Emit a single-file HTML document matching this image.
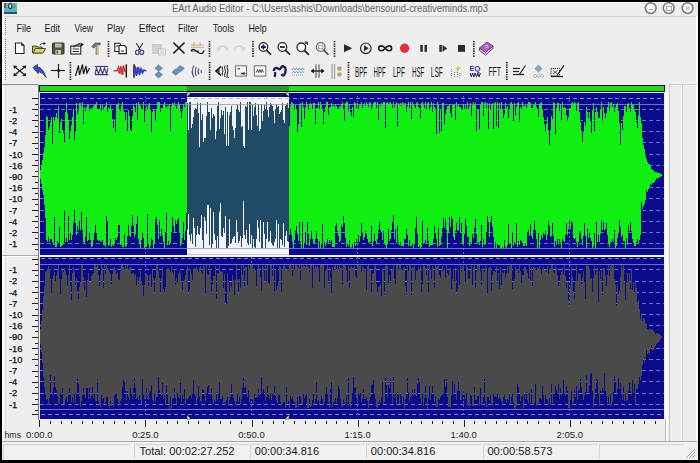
<!DOCTYPE html><html><head><meta charset="utf-8"><style>html,body{margin:0;padding:0;width:700px;height:463px;overflow:hidden;background:#eeeeee}svg{display:block}</style></head><body>
<svg width="700" height="463" viewBox="0 0 700 463" shape-rendering="crispEdges">
<rect x="0" y="0" width="700" height="463" fill="#eeeeee"/>
<rect x="0" y="2" width="700" height="14" fill="#ededed"/>
<rect x="0" y="2" width="700" height="1" fill="#fafafa"/>
<rect x="0" y="16" width="700" height="1" fill="#d4d4d4"/>
<rect x="4" y="3" width="13" height="10.5" fill="#58b4c4"/>
<rect x="4" y="3" width="13" height="4" fill="#7ab8b0"/>
<rect x="4" y="12.3" width="13" height="1.3" fill="#205a68"/>
<rect x="4" y="3" width="1.5" height="5" fill="#3a6a60"/>
<ellipse cx="10.2" cy="6" rx="1.7" ry="2.6" fill="#c8f0e0" stroke="#1a4a3a" stroke-width="1.3" shape-rendering="auto"/>
<rect x="13.5" y="3.5" width="1.2" height="4" fill="#4a8a80"/>
<text x="172" y="11.5" font-family="Liberation Sans" font-size="10" fill="#646464" textLength="316" lengthAdjust="spacingAndGlyphs">EArt Audio Editor - C:\Users\ashis\Downloads\bensound-creativeminds.mp3</text>
<circle cx="650.7" cy="8.1" r="5.4" fill="#f6f6f6" stroke="#7a7a7a" stroke-width="1.6" shape-rendering="auto"/>
<circle cx="668.7" cy="8.1" r="5.4" fill="#f6f6f6" stroke="#7a7a7a" stroke-width="1.6" shape-rendering="auto"/>
<circle cx="687.6" cy="8.1" r="5.4" fill="#f6f6f6" stroke="#7a7a7a" stroke-width="1.6" shape-rendering="auto"/>
<line x1="648.5" y1="9.5" x2="653" y2="9.5" stroke="#9a9a9a" stroke-width="1"/>
<rect x="666.5" y="6" width="4.5" height="4" fill="none" stroke="#a0a0a0" stroke-width="0.9"/>
<path d="M685.8 6.5 L689.4 10 M689.4 6.5 L685.8 10" stroke="#a0a0a0" stroke-width="0.9" shape-rendering="auto"/>
<text x="16.4" y="31.6" font-family="Liberation Sans" font-size="10.3" fill="#1a1a1a" textLength="14.6" lengthAdjust="spacingAndGlyphs">File</text>
<text x="44.4" y="31.6" font-family="Liberation Sans" font-size="10.3" fill="#1a1a1a" textLength="15.6" lengthAdjust="spacingAndGlyphs">Edit</text>
<text x="74.4" y="31.6" font-family="Liberation Sans" font-size="10.3" fill="#1a1a1a" textLength="18.6" lengthAdjust="spacingAndGlyphs">View</text>
<text x="107" y="31.6" font-family="Liberation Sans" font-size="10.3" fill="#1a1a1a" textLength="18" lengthAdjust="spacingAndGlyphs">Play</text>
<text x="138.7" y="31.6" font-family="Liberation Sans" font-size="10.3" fill="#1a1a1a" textLength="25.6" lengthAdjust="spacingAndGlyphs">Effect</text>
<text x="178" y="31.6" font-family="Liberation Sans" font-size="10.3" fill="#1a1a1a" textLength="20" lengthAdjust="spacingAndGlyphs">Filter</text>
<text x="212.7" y="31.6" font-family="Liberation Sans" font-size="10.3" fill="#1a1a1a" textLength="21.3" lengthAdjust="spacingAndGlyphs">Tools</text>
<text x="248.4" y="31.6" font-family="Liberation Sans" font-size="10.3" fill="#1a1a1a" textLength="18.3" lengthAdjust="spacingAndGlyphs">Help</text>
<rect x="0" y="0" width="700" height="2" fill="#000"/>
<rect x="0" y="0" width="2" height="463" fill="#000"/>
<rect x="698" y="0" width="2" height="463" fill="#000"/>
<rect x="0" y="460" width="700" height="3" fill="#000"/>
<rect x="2" y="16" width="2" height="425" fill="#fbfbfb"/>
<rect x="5" y="85" width="1" height="356" fill="#e2e2e2"/>
<line x1="5.5" y1="18" x2="5.5" y2="36" stroke="#707070" stroke-width="1" stroke-dasharray="1 1"/>
<rect x="696" y="16" width="2" height="425" fill="#fbfbfb"/>
<rect x="2" y="84" width="36" height="1" fill="#8c8c8c"/>
<rect x="38" y="85" width="1" height="335" fill="#7a7a7a"/>
<text x="9" y="112.7" font-family="Liberation Sans" font-size="9.4" fill="#111" stroke="#111" stroke-width="0.25">-1</text>
<rect x="32" y="109" width="6" height="1" fill="#202020"/>
<text x="9" y="123.9" font-family="Liberation Sans" font-size="9.4" fill="#111" stroke="#111" stroke-width="0.25">-2</text>
<rect x="32" y="120" width="6" height="1" fill="#202020"/>
<text x="9" y="135.1" font-family="Liberation Sans" font-size="9.4" fill="#111" stroke="#111" stroke-width="0.25">-4</text>
<rect x="32" y="132" width="6" height="1" fill="#202020"/>
<text x="9" y="146.3" font-family="Liberation Sans" font-size="9.4" fill="#111" stroke="#111" stroke-width="0.25">-7</text>
<rect x="32" y="143" width="6" height="1" fill="#202020"/>
<text x="9" y="157.5" font-family="Liberation Sans" font-size="9.4" fill="#111" stroke="#111" stroke-width="0.25">-10</text>
<rect x="32" y="154" width="6" height="1" fill="#202020"/>
<text x="9" y="168.7" font-family="Liberation Sans" font-size="9.4" fill="#111" stroke="#111" stroke-width="0.25">-16</text>
<rect x="32" y="165" width="6" height="1" fill="#202020"/>
<text x="9" y="179.9" font-family="Liberation Sans" font-size="9.4" fill="#111" stroke="#111" stroke-width="0.25">-90</text>
<rect x="32" y="176" width="6" height="1" fill="#202020"/>
<text x="9" y="191.1" font-family="Liberation Sans" font-size="9.4" fill="#111" stroke="#111" stroke-width="0.25">-16</text>
<rect x="32" y="188" width="6" height="1" fill="#202020"/>
<text x="9" y="202.3" font-family="Liberation Sans" font-size="9.4" fill="#111" stroke="#111" stroke-width="0.25">-10</text>
<rect x="32" y="199" width="6" height="1" fill="#202020"/>
<text x="9" y="213.5" font-family="Liberation Sans" font-size="9.4" fill="#111" stroke="#111" stroke-width="0.25">-7</text>
<rect x="32" y="210" width="6" height="1" fill="#202020"/>
<text x="9" y="224.7" font-family="Liberation Sans" font-size="9.4" fill="#111" stroke="#111" stroke-width="0.25">-4</text>
<rect x="32" y="221" width="6" height="1" fill="#202020"/>
<text x="9" y="235.9" font-family="Liberation Sans" font-size="9.4" fill="#111" stroke="#111" stroke-width="0.25">-2</text>
<rect x="32" y="232" width="6" height="1" fill="#202020"/>
<text x="9" y="247.1" font-family="Liberation Sans" font-size="9.4" fill="#111" stroke="#111" stroke-width="0.25">-1</text>
<rect x="32" y="244" width="6" height="1" fill="#202020"/>
<rect x="35" y="104" width="3" height="1" fill="#202020"/>
<rect x="35" y="115" width="3" height="1" fill="#202020"/>
<rect x="35" y="126" width="3" height="1" fill="#202020"/>
<rect x="35" y="137" width="3" height="1" fill="#202020"/>
<rect x="35" y="148" width="3" height="1" fill="#202020"/>
<rect x="35" y="160" width="3" height="1" fill="#202020"/>
<rect x="35" y="171" width="3" height="1" fill="#202020"/>
<rect x="35" y="182" width="3" height="1" fill="#202020"/>
<rect x="35" y="193" width="3" height="1" fill="#202020"/>
<rect x="35" y="204" width="3" height="1" fill="#202020"/>
<rect x="35" y="216" width="3" height="1" fill="#202020"/>
<rect x="35" y="227" width="3" height="1" fill="#202020"/>
<rect x="35" y="238" width="3" height="1" fill="#202020"/>
<rect x="35" y="249" width="3" height="1" fill="#202020"/>
<rect x="32" y="98" width="6" height="1" fill="#202020"/>
<text x="9" y="273.2" font-family="Liberation Sans" font-size="9.4" fill="#111" stroke="#111" stroke-width="0.25">-1</text>
<rect x="32" y="270" width="6" height="1" fill="#202020"/>
<text x="9" y="284.4" font-family="Liberation Sans" font-size="9.4" fill="#111" stroke="#111" stroke-width="0.25">-2</text>
<rect x="32" y="281" width="6" height="1" fill="#202020"/>
<text x="9" y="295.6" font-family="Liberation Sans" font-size="9.4" fill="#111" stroke="#111" stroke-width="0.25">-4</text>
<rect x="32" y="292" width="6" height="1" fill="#202020"/>
<text x="9" y="306.8" font-family="Liberation Sans" font-size="9.4" fill="#111" stroke="#111" stroke-width="0.25">-7</text>
<rect x="32" y="303" width="6" height="1" fill="#202020"/>
<text x="9" y="318.0" font-family="Liberation Sans" font-size="9.4" fill="#111" stroke="#111" stroke-width="0.25">-10</text>
<rect x="32" y="315" width="6" height="1" fill="#202020"/>
<text x="9" y="329.2" font-family="Liberation Sans" font-size="9.4" fill="#111" stroke="#111" stroke-width="0.25">-16</text>
<rect x="32" y="326" width="6" height="1" fill="#202020"/>
<text x="9" y="340.4" font-family="Liberation Sans" font-size="9.4" fill="#111" stroke="#111" stroke-width="0.25">-90</text>
<rect x="32" y="337" width="6" height="1" fill="#202020"/>
<text x="9" y="351.6" font-family="Liberation Sans" font-size="9.4" fill="#111" stroke="#111" stroke-width="0.25">-16</text>
<rect x="32" y="348" width="6" height="1" fill="#202020"/>
<text x="9" y="362.8" font-family="Liberation Sans" font-size="9.4" fill="#111" stroke="#111" stroke-width="0.25">-10</text>
<rect x="32" y="359" width="6" height="1" fill="#202020"/>
<text x="9" y="374.0" font-family="Liberation Sans" font-size="9.4" fill="#111" stroke="#111" stroke-width="0.25">-7</text>
<rect x="32" y="371" width="6" height="1" fill="#202020"/>
<text x="9" y="385.2" font-family="Liberation Sans" font-size="9.4" fill="#111" stroke="#111" stroke-width="0.25">-4</text>
<rect x="32" y="382" width="6" height="1" fill="#202020"/>
<text x="9" y="396.4" font-family="Liberation Sans" font-size="9.4" fill="#111" stroke="#111" stroke-width="0.25">-2</text>
<rect x="32" y="393" width="6" height="1" fill="#202020"/>
<text x="9" y="407.6" font-family="Liberation Sans" font-size="9.4" fill="#111" stroke="#111" stroke-width="0.25">-1</text>
<rect x="32" y="404" width="6" height="1" fill="#202020"/>
<rect x="35" y="264" width="3" height="1" fill="#202020"/>
<rect x="35" y="275" width="3" height="1" fill="#202020"/>
<rect x="35" y="287" width="3" height="1" fill="#202020"/>
<rect x="35" y="298" width="3" height="1" fill="#202020"/>
<rect x="35" y="309" width="3" height="1" fill="#202020"/>
<rect x="35" y="320" width="3" height="1" fill="#202020"/>
<rect x="35" y="331" width="3" height="1" fill="#202020"/>
<rect x="35" y="343" width="3" height="1" fill="#202020"/>
<rect x="35" y="354" width="3" height="1" fill="#202020"/>
<rect x="35" y="365" width="3" height="1" fill="#202020"/>
<rect x="35" y="376" width="3" height="1" fill="#202020"/>
<rect x="35" y="387" width="3" height="1" fill="#202020"/>
<rect x="35" y="399" width="3" height="1" fill="#202020"/>
<rect x="35" y="410" width="3" height="1" fill="#202020"/>
<rect x="32" y="259" width="6" height="1" fill="#202020"/>
<rect x="32" y="414" width="6" height="1" fill="#202020"/>
<rect x="2" y="255" width="36" height="1" fill="#a8a8a8"/>
<rect x="2" y="256" width="36" height="1" fill="#fafafa"/>
<rect x="39" y="85" width="626" height="7" fill="#000"/>
<rect x="40" y="86" width="624" height="5" fill="#22dd22"/>
<rect x="187" y="86" width="102" height="5" fill="#2a9a2a"/>
<rect x="39" y="92" width="626" height="1" fill="#d8e4f0"/>
<rect x="40" y="93" width="624" height="162" fill="#0a0a8a"/>
<line x1="40" y1="109.5" x2="664" y2="109.5" stroke="#6a6ad8" stroke-width="1" stroke-dasharray="4 3"/>
<line x1="40" y1="120.5" x2="664" y2="120.5" stroke="#6a6ad8" stroke-width="1" stroke-dasharray="4 3"/>
<line x1="40" y1="131.5" x2="664" y2="131.5" stroke="#6a6ad8" stroke-width="1" stroke-dasharray="4 3"/>
<line x1="40" y1="142.5" x2="664" y2="142.5" stroke="#6a6ad8" stroke-width="1" stroke-dasharray="4 3"/>
<line x1="40" y1="154.5" x2="664" y2="154.5" stroke="#6a6ad8" stroke-width="1" stroke-dasharray="4 3"/>
<line x1="40" y1="165.5" x2="664" y2="165.5" stroke="#6a6ad8" stroke-width="1" stroke-dasharray="4 3"/>
<line x1="40" y1="187.5" x2="664" y2="187.5" stroke="#6a6ad8" stroke-width="1" stroke-dasharray="4 3"/>
<line x1="40" y1="198.5" x2="664" y2="198.5" stroke="#6a6ad8" stroke-width="1" stroke-dasharray="4 3"/>
<line x1="40" y1="210.5" x2="664" y2="210.5" stroke="#6a6ad8" stroke-width="1" stroke-dasharray="4 3"/>
<line x1="40" y1="221.5" x2="664" y2="221.5" stroke="#6a6ad8" stroke-width="1" stroke-dasharray="4 3"/>
<line x1="40" y1="232.5" x2="664" y2="232.5" stroke="#6a6ad8" stroke-width="1" stroke-dasharray="4 3"/>
<line x1="40" y1="243.5" x2="664" y2="243.5" stroke="#6a6ad8" stroke-width="1" stroke-dasharray="4 3"/>
<line x1="41" y1="98.5" x2="664" y2="98.5" stroke="#8080e8" stroke-width="1" stroke-dasharray="4 3"/>
<line x1="145.5" y1="96" x2="145.5" y2="256" stroke="#5a5ac8" stroke-width="1" stroke-dasharray="2 2"/>
<line x1="251.5" y1="96" x2="251.5" y2="256" stroke="#5a5ac8" stroke-width="1" stroke-dasharray="2 2"/>
<line x1="357.5" y1="96" x2="357.5" y2="256" stroke="#5a5ac8" stroke-width="1" stroke-dasharray="2 2"/>
<line x1="463.5" y1="96" x2="463.5" y2="256" stroke="#5a5ac8" stroke-width="1" stroke-dasharray="2 2"/>
<line x1="569.5" y1="96" x2="569.5" y2="256" stroke="#5a5ac8" stroke-width="1" stroke-dasharray="2 2"/>
<path d="M40.5 170.3V179.4M41.5 165.6V184.4M42.5 160.0V189.5M43.5 153.3V194.7M44.5 146.8V205.2M45.5 135.3V217.7M46.5 115.5V239.6M47.5 116.9V242.3M48.5 129.7V236.6M49.5 127.1V242.3M50.5 122.0V238.7M51.5 116.9V238.6M52.5 144.1V242.1M53.5 116.7V244.6M54.5 120.5V217.4M55.5 116.7V247.4M56.5 112.9V247.3M57.5 117.8V241.2M58.5 106.2V243.4M59.5 132.8V226.6M60.5 122.2V247.4M61.5 119.0V245.5M62.5 129.9V244.6M63.5 132.5V243.5M64.5 143.0V209.7M65.5 111.8V241.5M66.5 102.9V238.2M67.5 113.1V241.5M68.5 120.3V216.3M69.5 139.2V240.3M70.5 132.4V232.6M71.5 124.6V240.3M72.5 116.9V235.3M73.5 109.2V222.5M74.5 139.6V209.8M75.5 132.4V222.5M76.5 102.8V235.3M77.5 113.7V226.2M78.5 110.6V229.7M79.5 103.2V220.5M80.5 102.9V229.7M81.5 106.6V211.9M82.5 102.3V230.0M83.5 124.1V242.0M84.5 106.8V242.6M85.5 111.2V237.3M86.5 106.8V217.0M87.5 104.1V241.4M88.5 104.8V240.1M89.5 110.8V232.3M90.5 108.1V240.1M91.5 109.7V247.1M92.5 108.1V246.4M93.5 106.4V240.4M94.5 105.2V232.9M95.5 103.5V225.3M96.5 101.7V232.9M97.5 108.5V240.4M98.5 108.5V240.7M99.5 109.3V239.5M100.5 103.8V242.3M101.5 110.9V240.7M102.5 104.5V240.3M103.5 110.3V245.0M104.5 106.9V245.0M105.5 106.4V246.9M106.5 101.8V215.7M107.5 112.4V221.0M108.5 108.4V245.6M109.5 108.4V245.1M110.5 104.7V239.2M111.5 110.2V246.7M112.5 118.8V245.2M113.5 127.5V246.2M114.5 118.8V244.1M115.5 132.4V238.3M116.5 105.4V240.2M117.5 103.6V236.7M118.5 102.5V225.4M119.5 109.5V224.5M120.5 110.6V244.5M121.5 106.4V244.3M122.5 102.1V247.2M123.5 109.9V246.8M124.5 111.5V234.1M125.5 121.4V246.8M126.5 111.5V246.3M127.5 130.8V236.2M128.5 110.0V224.5M129.5 115.6V236.2M130.5 129.7V237.0M131.5 130.6V225.9M132.5 116.0V214.9M133.5 104.8V225.9M134.5 107.3V237.0M135.5 111.8V234.0M136.5 102.5V223.5M137.5 119.6V216.4M138.5 102.3V239.0M139.5 103.7V243.6M140.5 105.6V247.9M141.5 108.8V240.1M142.5 109.3V232.5M143.5 101.8V238.3M144.5 121.5V247.6M145.5 111.1V247.1M146.5 106.2V247.0M147.5 109.3V213.6M148.5 105.0V243.1M149.5 102.5V247.6M150.5 109.7V246.3M151.5 132.2V238.3M152.5 112.2V240.1M153.5 109.3V247.7M154.5 111.1V242.9M155.5 121.2V219.3M156.5 108.9V216.5M157.5 101.6V225.3M158.5 101.7V238.5M159.5 102.3V220.3M160.5 111.5V235.6M161.5 108.3V229.3M162.5 107.8V235.6M163.5 105.3V241.8M164.5 101.8V247.9M165.5 105.7V231.8M166.5 108.4V213.1M167.5 105.7V245.3M168.5 106.1V240.6M169.5 104.1V245.1M170.5 131.1V243.0M171.5 105.7V232.3M172.5 102.5V216.7M173.5 105.4V225.7M174.5 101.6V233.1M175.5 105.6V220.2M176.5 109.4V224.3M177.5 105.3V220.1M178.5 101.7V218.1M179.5 104.4V233.0M180.5 111.3V246.3M181.5 118.4V242.5M182.5 110.9V237.6M183.5 103.5V222.4M184.5 106.9V239.9M185.5 102.0V230.5M186.5 101.5V213.0M187.5 103.3V229.8M188.5 130.1V214.2M189.5 102.0V234.5M190.5 102.2V241.4M191.5 127.7V234.0M192.5 123.8V244.0M193.5 116.6V217.5M194.5 109.6V228.3M195.5 107.7V246.8M196.5 109.2V234.7M197.5 103.3V226.2M198.5 113.3V234.1M199.5 146.5V235.3M200.5 103.1V227.8M201.5 120.0V215.0M202.5 113.8V240.0M203.5 141.5V247.9M204.5 137.6V217.4M205.5 137.5V220.6M206.5 115.6V233.6M207.5 102.1V205.2M208.5 112.2V204.6M209.5 112.1V245.2M210.5 129.7V208.4M211.5 107.5V248.0M212.5 117.7V244.4M213.5 114.0V212.4M214.5 115.9V234.1M215.5 138.9V240.3M216.5 130.7V247.5M217.5 106.1V236.4M218.5 101.5V247.7M219.5 128.7V211.5M220.5 118.1V202.5M221.5 109.8V236.4M222.5 115.1V237.1M223.5 111.1V228.4M224.5 134.4V233.1M225.5 107.3V215.6M226.5 146.0V247.9M227.5 111.9V247.9M228.5 145.5V245.5M229.5 114.8V219.3M230.5 112.4V243.5M231.5 105.7V242.8M232.5 125.5V238.6M233.5 130.4V236.6M234.5 137.9V236.3M235.5 128.4V242.7M236.5 108.5V220.1M237.5 105.4V231.7M238.5 109.8V242.8M239.5 112.3V241.0M240.5 101.6V235.9M241.5 126.6V246.9M242.5 125.6V238.1M243.5 145.8V200.7M244.5 148.1V234.6M245.5 105.9V238.5M246.5 106.7V230.3M247.5 101.7V243.4M248.5 129.5V245.2M249.5 102.2V224.3M250.5 102.2V243.6M251.5 129.8V234.8M252.5 104.3V247.7M253.5 116.0V238.5M254.5 107.0V246.8M255.5 103.1V247.8M256.5 115.1V238.8M257.5 126.0V220.3M258.5 104.0V227.6M259.5 130.7V241.9M260.5 129.0V219.6M261.5 104.4V247.5M262.5 121.2V247.6M263.5 110.8V221.9M264.5 104.8V234.4M265.5 109.1V248.0M266.5 101.9V238.9M267.5 110.1V221.6M268.5 116.9V241.7M269.5 107.1V240.6M270.5 102.9V230.8M271.5 104.3V242.5M272.5 105.5V244.7M273.5 111.1V246.0M274.5 122.6V241.5M275.5 108.6V239.0M276.5 103.7V220.4M277.5 107.3V248.0M278.5 106.2V224.2M279.5 114.0V247.9M280.5 111.5V239.2M281.5 110.3V239.5M282.5 103.0V245.1M283.5 120.2V223.2M284.5 123.2V247.4M285.5 105.7V236.0M286.5 103.8V230.8M287.5 102.5V240.8M288.5 108.1V241.7M289.5 125.6V235.4M290.5 105.8V229.1M291.5 102.4V235.4M292.5 102.7V241.7M293.5 103.5V248.0M294.5 110.2V239.5M295.5 105.1V231.3M296.5 109.3V226.4M297.5 131.7V233.6M298.5 124.2V240.8M299.5 104.5V221.7M300.5 102.9V241.6M301.5 126.6V247.6M302.5 101.7V220.9M303.5 106.9V247.6M304.5 119.1V242.5M305.5 107.0V231.6M306.5 101.9V244.8M307.5 105.3V222.1M308.5 109.5V234.3M309.5 104.1V246.0M310.5 103.0V239.4M311.5 103.7V230.7M312.5 109.0V238.5M313.5 103.4V244.3M314.5 103.4V243.4M315.5 124.2V239.4M316.5 107.8V230.8M317.5 108.2V239.4M318.5 102.2V247.7M319.5 108.8V240.5M320.5 101.5V247.6M321.5 105.0V243.4M322.5 109.9V223.5M323.5 123.8V248.0M324.5 111.5V242.0M325.5 107.1V245.5M326.5 101.7V243.4M327.5 102.0V238.7M328.5 115.4V243.4M329.5 107.4V239.7M330.5 107.4V241.7M331.5 103.2V239.6M332.5 106.4V246.7M333.5 105.0V247.2M334.5 106.8V246.6M335.5 103.8V225.8M336.5 106.3V223.4M337.5 107.9V230.6M338.5 108.9V236.4M339.5 106.0V242.2M340.5 106.8V240.8M341.5 103.9V224.8M342.5 102.0V226.9M343.5 110.2V216.4M344.5 120.8V222.5M345.5 102.9V237.5M346.5 101.6V247.1M347.5 101.8V243.6M348.5 111.0V245.5M349.5 104.2V239.7M350.5 112.3V247.5M351.5 115.8V247.2M352.5 106.9V244.1M353.5 117.1V247.9M354.5 102.1V242.0M355.5 103.0V246.3M356.5 108.0V238.6M357.5 102.7V241.6M358.5 109.2V235.2M359.5 105.1V241.6M360.5 104.5V235.5M361.5 101.6V222.9M362.5 107.8V232.2M363.5 104.9V239.6M364.5 102.8V236.8M365.5 106.2V231.1M366.5 101.5V234.0M367.5 103.5V238.6M368.5 106.8V243.3M369.5 102.1V242.2M370.5 103.1V242.3M371.5 108.6V225.7M372.5 106.0V246.1M373.5 102.7V241.1M374.5 102.0V234.3M375.5 101.5V241.1M376.5 108.4V243.9M377.5 101.7V238.8M378.5 119.5V229.7M379.5 104.3V220.5M380.5 105.5V229.7M381.5 103.0V232.1M382.5 103.9V240.1M383.5 101.7V230.6M384.5 102.3V243.9M385.5 128.4V245.1M386.5 103.0V247.9M387.5 101.7V244.4M388.5 104.3V228.7M389.5 103.4V240.8M390.5 101.8V238.9M391.5 104.3V229.7M392.5 108.2V220.6M393.5 101.5V215.4M394.5 106.8V238.9M395.5 105.2V229.2M396.5 101.5V242.9M397.5 125.5V226.0M398.5 102.9V242.0M399.5 105.0V244.9M400.5 103.2V242.2M401.5 106.3V246.0M402.5 102.3V246.2M403.5 103.2V246.4M404.5 105.2V239.1M405.5 103.2V238.8M406.5 111.6V228.5M407.5 106.4V234.6M408.5 102.2V245.7M409.5 108.3V240.4M410.5 101.7V246.1M411.5 118.5V246.4M412.5 101.7V243.3M413.5 104.0V248.0M414.5 106.1V244.1M415.5 108.1V228.0M416.5 103.2V216.9M417.5 101.5V233.7M418.5 106.7V246.5M419.5 107.7V245.8M420.5 118.4V247.9M421.5 103.3V247.3M422.5 101.8V220.5M423.5 104.7V244.3M424.5 108.1V242.6M425.5 102.1V239.9M426.5 109.1V242.6M427.5 103.3V228.3M428.5 102.0V241.1M429.5 110.1V246.7M430.5 106.8V245.3M431.5 102.3V245.4M432.5 111.6V244.9M433.5 102.6V238.9M434.5 106.6V226.3M435.5 109.4V232.6M436.5 134.0V238.7M437.5 101.9V247.0M438.5 105.0V228.0M439.5 132.5V246.1M440.5 110.2V245.0M441.5 130.5V236.6M442.5 102.9V227.9M443.5 102.5V217.9M444.5 123.8V227.9M445.5 114.3V218.7M446.5 110.1V230.4M447.5 106.2V247.7M448.5 106.4V232.8M449.5 103.6V216.8M450.5 113.2V226.6M451.5 116.5V215.9M452.5 105.3V219.2M453.5 104.8V237.3M454.5 105.3V239.7M455.5 120.4V231.3M456.5 102.0V223.0M457.5 105.6V230.1M458.5 103.8V230.7M459.5 106.5V217.3M460.5 107.2V232.7M461.5 110.2V223.1M462.5 108.5V244.1M463.5 104.0V243.8M464.5 109.1V233.6M465.5 104.9V219.2M466.5 109.1V225.9M467.5 101.6V237.0M468.5 109.0V236.7M469.5 105.6V245.5M470.5 103.0V242.0M471.5 115.9V243.7M472.5 104.6V233.8M473.5 101.6V238.0M474.5 104.9V228.0M475.5 103.0V219.3M476.5 131.8V233.7M477.5 109.9V243.7M478.5 108.6V241.5M479.5 128.6V245.3M480.5 105.3V240.5M481.5 101.8V224.7M482.5 101.9V246.9M483.5 116.1V238.8M484.5 102.9V245.1M485.5 101.6V244.4M486.5 108.0V231.8M487.5 103.4V215.7M488.5 128.5V222.1M489.5 103.0V237.3M490.5 109.5V222.4M491.5 104.4V215.8M492.5 102.9V226.6M493.5 128.8V237.3M494.5 103.4V248.0M495.5 102.1V242.3M496.5 125.9V247.7M497.5 102.2V243.5M498.5 128.1V245.4M499.5 103.0V245.2M500.5 108.7V247.8M501.5 101.9V247.7M502.5 109.5V246.8M503.5 117.7V247.9M504.5 114.4V240.4M505.5 102.5V247.2M506.5 107.7V248.0M507.5 106.3V245.1M508.5 117.6V224.2M509.5 109.4V242.5M510.5 102.8V242.9M511.5 101.7V247.6M512.5 104.1V232.3M513.5 120.7V246.1M514.5 102.8V241.6M515.5 114.8V244.3M516.5 107.3V223.1M517.5 102.8V247.4M518.5 102.2V241.1M519.5 121.7V245.2M520.5 107.2V239.8M521.5 109.4V241.3M522.5 102.2V243.0M523.5 106.1V246.2M524.5 106.2V246.4M525.5 104.8V242.6M526.5 108.4V246.2M527.5 104.8V232.1M528.5 102.1V229.7M529.5 102.1V236.0M530.5 102.5V223.9M531.5 107.5V236.0M532.5 107.7V239.1M533.5 104.5V230.2M534.5 105.4V221.3M535.5 101.6V230.2M536.5 106.8V239.1M537.5 108.7V247.8M538.5 116.5V233.2M539.5 104.0V248.0M540.5 103.0V240.2M541.5 101.7V235.0M542.5 109.0V238.2M543.5 116.6V232.8M544.5 124.1V235.0M545.5 131.7V231.3M546.5 124.1V239.6M547.5 116.6V234.7M548.5 130.2V221.4M549.5 144.6V225.9M550.5 130.2V237.0M551.5 115.9V235.7M552.5 119.0V223.4M553.5 102.1V235.7M554.5 103.3V246.5M555.5 134.4V241.4M556.5 108.4V244.7M557.5 102.9V238.7M558.5 102.8V243.8M559.5 111.4V238.8M560.5 103.7V242.1M561.5 119.9V247.8M562.5 101.7V239.4M563.5 107.9V240.7M564.5 106.5V242.2M565.5 108.1V235.4M566.5 114.8V222.8M567.5 121.4V235.4M568.5 117.1V229.1M569.5 109.3V219.6M570.5 107.7V229.1M571.5 102.5V221.2M572.5 101.7V223.1M573.5 103.9V238.2M574.5 101.5V238.5M575.5 103.0V238.1M576.5 111.3V241.6M577.5 103.0V247.2M578.5 102.2V242.4M579.5 111.5V231.5M580.5 121.6V230.8M581.5 131.6V239.3M582.5 141.7V245.3M583.5 131.6V235.5M584.5 121.6V223.1M585.5 125.8V235.5M586.5 106.9V247.9M587.5 112.3V229.2M588.5 117.7V237.9M589.5 112.3V232.8M590.5 121.0V237.9M591.5 132.7V240.9M592.5 109.5V247.8M593.5 103.3V246.2M594.5 131.6V232.9M595.5 111.8V247.7M596.5 107.0V222.1M597.5 112.4V241.7M598.5 117.9V235.4M599.5 118.3V241.7M600.5 109.9V233.9M601.5 101.8V219.8M602.5 121.9V230.0M603.5 107.1V221.0M604.5 112.8V230.0M605.5 118.4V228.8M606.5 112.8V222.8M607.5 107.1V235.4M608.5 101.5V244.2M609.5 110.8V246.7M610.5 103.0V242.2M611.5 102.4V241.7M612.5 106.8V238.6M613.5 103.9V241.7M614.5 111.6V230.3M615.5 107.0V247.5M616.5 104.4V245.7M617.5 103.1V238.1M618.5 110.6V232.7M619.5 123.2V220.0M620.5 144.8V226.8M621.5 123.2V237.4M622.5 130.1V234.7M623.5 115.8V241.3M624.5 106.0V240.7M625.5 106.1V248.0M626.5 112.0V238.1M627.5 103.8V244.5M628.5 103.4V224.6M629.5 107.9V230.7M630.5 111.9V222.1M631.5 102.2V230.7M632.5 105.3V239.4M633.5 104.0V242.8M634.5 108.6V245.7M635.5 111.9V245.7M636.5 122.4V242.1M637.5 127.5V238.8M638.5 114.5V243.6M639.5 102.2V239.8M640.5 116.8V234.8M641.5 122.5V201.6M642.5 138.1V208.9M643.5 144.6V205.5M644.5 149.4V204.0M645.5 156.4V200.1M646.5 158.5V189.6M647.5 162.1V192.1M648.5 164.4V188.8M649.5 164.2V186.8M650.5 166.3V184.1M651.5 169.0V185.0M652.5 170.0V183.4M653.5 170.0V183.3M654.5 171.5V182.1M655.5 171.5V180.0M656.5 172.3V178.3M657.5 172.5V178.6M658.5 172.8V178.0M659.5 173.4V177.2M660.5 173.7V177.0M661.5 174.3V176.0M662.5 174.7V175.4" stroke="#10f010" stroke-width="1" fill="none"/>
<rect x="40" y="104" width="624" height="1" fill="#9090f0" opacity="0.75"/>
<rect x="40" y="248" width="624" height="1" fill="#9090f0" opacity="0.75"/>
<rect x="40" y="257" width="624" height="162" fill="#0a0a8a"/>
<line x1="40" y1="269.5" x2="664" y2="269.5" stroke="#6a6ad8" stroke-width="1" stroke-dasharray="4 3"/>
<line x1="40" y1="281.5" x2="664" y2="281.5" stroke="#6a6ad8" stroke-width="1" stroke-dasharray="4 3"/>
<line x1="40" y1="292.5" x2="664" y2="292.5" stroke="#6a6ad8" stroke-width="1" stroke-dasharray="4 3"/>
<line x1="40" y1="303.5" x2="664" y2="303.5" stroke="#6a6ad8" stroke-width="1" stroke-dasharray="4 3"/>
<line x1="40" y1="314.5" x2="664" y2="314.5" stroke="#6a6ad8" stroke-width="1" stroke-dasharray="4 3"/>
<line x1="40" y1="325.5" x2="664" y2="325.5" stroke="#6a6ad8" stroke-width="1" stroke-dasharray="4 3"/>
<line x1="40" y1="348.5" x2="664" y2="348.5" stroke="#6a6ad8" stroke-width="1" stroke-dasharray="4 3"/>
<line x1="40" y1="359.5" x2="664" y2="359.5" stroke="#6a6ad8" stroke-width="1" stroke-dasharray="4 3"/>
<line x1="40" y1="370.5" x2="664" y2="370.5" stroke="#6a6ad8" stroke-width="1" stroke-dasharray="4 3"/>
<line x1="40" y1="381.5" x2="664" y2="381.5" stroke="#6a6ad8" stroke-width="1" stroke-dasharray="4 3"/>
<line x1="40" y1="393.5" x2="664" y2="393.5" stroke="#6a6ad8" stroke-width="1" stroke-dasharray="4 3"/>
<line x1="40" y1="404.5" x2="664" y2="404.5" stroke="#6a6ad8" stroke-width="1" stroke-dasharray="4 3"/>
<line x1="41" y1="258.5" x2="664" y2="258.5" stroke="#8080e8" stroke-width="1" stroke-dasharray="4 3"/>
<line x1="41" y1="414.5" x2="664" y2="414.5" stroke="#8080e8" stroke-width="1" stroke-dasharray="4 3"/>
<line x1="145.5" y1="257" x2="145.5" y2="417" stroke="#5a5ac8" stroke-width="1" stroke-dasharray="2 2"/>
<line x1="251.5" y1="257" x2="251.5" y2="417" stroke="#5a5ac8" stroke-width="1" stroke-dasharray="2 2"/>
<line x1="357.5" y1="257" x2="357.5" y2="417" stroke="#5a5ac8" stroke-width="1" stroke-dasharray="2 2"/>
<line x1="463.5" y1="257" x2="463.5" y2="417" stroke="#5a5ac8" stroke-width="1" stroke-dasharray="2 2"/>
<line x1="569.5" y1="257" x2="569.5" y2="417" stroke="#5a5ac8" stroke-width="1" stroke-dasharray="2 2"/>
<path d="M40.5 329.2V343.8M41.5 321.0V352.0M42.5 310.1V362.9M43.5 296.4V376.6M44.5 285.8V387.2M45.5 271.9V394.7M46.5 270.6V400.1M47.5 269.3V398.7M48.5 266.4V404.5M49.5 269.4V397.5M50.5 278.6V374.7M51.5 293.2V394.1M52.5 278.6V394.5M53.5 275.3V386.9M54.5 272.4V375.8M55.5 280.8V386.9M56.5 274.8V389.9M57.5 270.5V396.1M58.5 265.3V402.6M59.5 278.8V404.0M60.5 293.6V393.3M61.5 278.8V395.1M62.5 270.2V388.0M63.5 271.9V403.9M64.5 268.3V405.1M65.5 271.0V399.3M66.5 274.5V396.8M67.5 284.7V401.9M68.5 275.0V394.8M69.5 264.8V387.7M70.5 285.8V394.8M71.5 299.7V401.9M72.5 273.2V397.0M73.5 266.9V403.4M74.5 272.2V393.5M75.5 284.8V402.3M76.5 277.5V394.1M77.5 290.9V379.2M78.5 298.6V384.4M79.5 287.4V396.6M80.5 282.0V407.0M81.5 264.6V400.8M82.5 265.0V394.7M83.5 276.9V387.5M84.5 289.8V394.7M85.5 280.4V398.3M86.5 296.8V387.6M87.5 280.4V388.1M88.5 273.1V398.5M89.5 282.2V388.0M90.5 282.1V398.5M91.5 276.0V395.8M92.5 274.1V386.6M93.5 272.6V397.8M94.5 264.4V394.2M95.5 264.5V400.5M96.5 267.2V401.3M97.5 265.4V380.2M98.5 275.1V401.2M99.5 286.2V405.4M100.5 275.1V407.0M101.5 264.3V394.7M102.5 266.7V399.3M103.5 287.5V397.9M104.5 264.8V403.2M105.5 273.5V402.3M106.5 264.6V396.7M107.5 267.5V397.0M108.5 268.7V406.1M109.5 272.1V408.0M110.5 274.1V401.0M111.5 284.2V406.2M112.5 274.1V403.1M113.5 268.2V407.0M114.5 267.1V395.9M115.5 269.7V393.8M116.5 273.7V393.6M117.5 273.1V398.7M118.5 279.4V402.0M119.5 279.6V405.0M120.5 271.2V401.0M121.5 265.1V399.2M122.5 264.2V386.6M123.5 267.0V379.5M124.5 268.9V382.1M125.5 265.3V391.0M126.5 270.0V400.0M127.5 264.8V391.0M128.5 268.7V396.7M129.5 268.3V399.3M130.5 267.0V387.5M131.5 273.6V394.2M132.5 273.3V398.6M133.5 273.2V388.2M134.5 274.5V377.7M135.5 274.3V388.2M136.5 284.6V398.6M137.5 277.4V396.9M138.5 284.1V399.5M139.5 277.4V394.7M140.5 271.1V399.5M141.5 281.0V404.2M142.5 285.2V379.0M143.5 295.8V395.0M144.5 285.2V398.6M145.5 274.6V395.9M146.5 274.0V388.4M147.5 274.8V398.7M148.5 285.5V398.7M149.5 274.8V392.7M150.5 274.2V391.1M151.5 286.6V384.5M152.5 269.7V399.5M153.5 278.2V401.8M154.5 292.5V393.7M155.5 278.2V401.2M156.5 264.6V397.2M157.5 264.0V397.1M158.5 271.2V377.4M159.5 278.0V389.8M160.5 291.9V392.5M161.5 278.0V396.0M162.5 266.9V381.2M163.5 289.0V399.4M164.5 292.1V395.3M165.5 286.9V404.8M166.5 269.2V385.1M167.5 267.9V395.0M168.5 268.1V403.4M169.5 269.0V408.9M170.5 271.8V396.9M171.5 265.5V407.7M172.5 272.1V399.3M173.5 274.1V398.3M174.5 268.5V387.6M175.5 284.5V398.3M176.5 277.6V404.5M177.5 283.4V393.3M178.5 273.7V396.8M179.5 271.4V398.3M180.5 272.5V380.3M181.5 281.0V402.2M182.5 289.5V395.4M183.5 281.0V399.1M184.5 280.2V389.3M185.5 274.8V403.7M186.5 269.4V398.8M187.5 264.8V398.5M188.5 293.4V398.2M189.5 290.4V395.6M190.5 269.4V394.9M191.5 274.0V398.2M192.5 279.8V394.4M193.5 268.1V379.9M194.5 269.5V394.4M195.5 269.3V395.8M196.5 266.8V402.7M197.5 269.1V398.8M198.5 271.5V385.8M199.5 267.8V397.3M200.5 266.3V401.2M201.5 271.5V402.3M202.5 274.2V388.9M203.5 265.2V390.1M204.5 267.0V396.0M205.5 292.8V400.5M206.5 265.4V393.9M207.5 274.4V387.3M208.5 274.6V384.7M209.5 264.6V392.8M210.5 271.0V394.9M211.5 293.7V387.7M212.5 284.1V398.5M213.5 276.4V403.5M214.5 275.9V399.7M215.5 266.1V402.3M216.5 298.7V392.0M217.5 272.5V400.2M218.5 273.3V394.2M219.5 265.6V382.0M220.5 271.4V399.4M221.5 270.8V398.5M222.5 272.1V395.8M223.5 288.0V403.1M224.5 273.5V401.6M225.5 303.7V404.5M226.5 303.5V400.0M227.5 273.2V396.5M228.5 282.3V406.3M229.5 291.5V399.7M230.5 282.3V396.7M231.5 286.7V384.4M232.5 275.3V393.4M233.5 279.7V397.6M234.5 295.4V401.2M235.5 279.7V405.3M236.5 264.1V400.6M237.5 278.7V394.0M238.5 293.3V402.4M239.5 278.7V396.8M240.5 288.3V403.6M241.5 265.0V398.6M242.5 275.3V388.3M243.5 264.2V377.9M244.5 285.8V388.3M245.5 266.8V386.7M246.5 266.6V394.2M247.5 285.2V397.0M248.5 264.0V390.2M249.5 267.6V401.5M250.5 264.0V398.8M251.5 265.3V397.9M252.5 264.0V400.4M253.5 270.8V403.2M254.5 267.9V393.5M255.5 269.6V398.3M256.5 285.7V397.4M257.5 269.6V397.9M258.5 265.3V389.4M259.5 267.6V395.7M260.5 277.1V393.2M261.5 290.7V377.4M262.5 265.8V393.2M263.5 268.2V388.5M264.5 282.4V391.9M265.5 264.8V400.5M266.5 281.3V397.4M267.5 264.1V385.9M268.5 283.4V395.2M269.5 284.4V398.7M270.5 264.5V394.2M271.5 264.1V400.0M272.5 276.3V393.9M273.5 265.4V395.7M274.5 294.4V385.6M275.5 268.6V395.7M276.5 290.3V400.1M277.5 285.7V403.2M278.5 281.3V395.2M279.5 266.3V395.1M280.5 267.2V402.1M281.5 292.1V405.9M282.5 268.8V403.7M283.5 266.2V401.6M284.5 264.1V402.0M285.5 267.7V407.7M286.5 270.2V386.6M287.5 268.8V402.9M288.5 270.8V400.5M289.5 265.4V408.1M290.5 264.0V396.4M291.5 266.2V399.3M292.5 275.7V396.6M293.5 264.0V400.7M294.5 269.0V402.3M295.5 264.8V407.7M296.5 264.6V408.0M297.5 265.5V397.0M298.5 268.2V407.0M299.5 265.4V396.3M300.5 279.5V395.5M301.5 265.0V404.3M302.5 266.5V405.3M303.5 264.6V394.2M304.5 266.1V397.9M305.5 266.6V396.1M306.5 264.6V394.4M307.5 265.8V407.5M308.5 267.3V408.2M309.5 271.8V398.6M310.5 264.3V406.5M311.5 264.2V406.3M312.5 287.8V399.7M313.5 264.0V393.7M314.5 271.2V404.0M315.5 265.8V399.4M316.5 267.1V382.3M317.5 265.5V400.9M318.5 268.3V399.6M319.5 282.1V404.8M320.5 265.3V400.6M321.5 264.3V396.4M322.5 264.4V399.0M323.5 264.0V404.8M324.5 288.4V401.6M325.5 271.2V394.1M326.5 269.2V386.7M327.5 264.0V394.1M328.5 283.2V401.6M329.5 267.3V407.6M330.5 278.1V389.0M331.5 292.6V381.9M332.5 266.5V406.7M333.5 269.9V402.0M334.5 265.6V401.5M335.5 264.2V397.9M336.5 270.0V403.4M337.5 265.5V397.7M338.5 268.8V386.3M339.5 265.0V389.4M340.5 267.9V399.2M341.5 266.7V405.7M342.5 284.2V406.7M343.5 264.6V400.3M344.5 265.3V402.2M345.5 265.5V404.9M346.5 269.5V395.7M347.5 281.8V402.7M348.5 266.1V378.4M349.5 288.4V405.4M350.5 266.7V406.5M351.5 266.2V401.9M352.5 267.8V392.9M353.5 266.6V376.8M354.5 266.0V388.4M355.5 276.2V387.4M356.5 278.0V398.2M357.5 265.7V402.9M358.5 264.7V393.5M359.5 266.2V394.9M360.5 265.0V393.1M361.5 271.6V402.2M362.5 266.2V399.0M363.5 267.6V389.0M364.5 271.0V399.0M365.5 269.4V399.1M366.5 289.6V396.5M367.5 265.8V401.0M368.5 264.1V407.8M369.5 267.5V401.3M370.5 269.5V397.0M371.5 291.6V385.1M372.5 274.1V383.9M373.5 272.8V379.6M374.5 266.3V394.3M375.5 264.0V398.9M376.5 283.5V407.3M377.5 291.8V408.1M378.5 287.3V403.1M379.5 285.8V400.0M380.5 283.7V402.8M381.5 296.3V397.0M382.5 268.9V381.7M383.5 271.2V404.2M384.5 294.2V401.9M385.5 266.2V378.2M386.5 264.4V385.1M387.5 265.5V397.1M388.5 282.6V384.8M389.5 275.3V388.3M390.5 283.1V379.3M391.5 270.2V394.2M392.5 268.8V402.9M393.5 265.3V377.0M394.5 278.5V397.7M395.5 283.8V393.8M396.5 264.8V405.1M397.5 264.1V392.1M398.5 268.5V394.5M399.5 264.4V404.0M400.5 264.0V393.4M401.5 269.4V395.6M402.5 269.8V403.8M403.5 267.6V397.4M404.5 267.2V408.4M405.5 286.3V398.8M406.5 294.0V393.3M407.5 265.5V377.9M408.5 271.1V392.2M409.5 264.4V400.6M410.5 266.4V396.7M411.5 295.4V396.4M412.5 267.3V390.1M413.5 268.2V396.4M414.5 264.5V389.4M415.5 280.3V395.2M416.5 271.2V396.4M417.5 270.2V383.8M418.5 267.7V378.3M419.5 268.6V381.6M420.5 265.6V398.6M421.5 292.3V405.1M422.5 283.7V394.4M423.5 264.7V405.7M424.5 266.1V397.5M425.5 267.8V385.9M426.5 274.9V397.5M427.5 265.4V408.8M428.5 291.7V398.4M429.5 264.4V385.9M430.5 269.7V400.0M431.5 279.1V393.9M432.5 266.1V386.4M433.5 270.9V393.9M434.5 287.5V401.5M435.5 264.7V396.2M436.5 266.6V407.0M437.5 265.5V406.8M438.5 265.2V399.1M439.5 275.4V399.5M440.5 277.7V397.2M441.5 270.8V394.9M442.5 265.9V395.1M443.5 270.9V394.1M444.5 268.6V379.2M445.5 277.8V387.3M446.5 265.0V379.2M447.5 273.3V397.3M448.5 274.6V407.3M449.5 268.6V406.8M450.5 267.7V406.8M451.5 289.1V395.0M452.5 279.3V380.9M453.5 269.3V395.0M454.5 281.1V383.7M455.5 267.8V393.4M456.5 292.8V399.9M457.5 289.9V390.8M458.5 268.6V381.7M459.5 284.5V390.8M460.5 265.3V399.9M461.5 272.4V399.6M462.5 266.3V393.8M463.5 265.4V390.3M464.5 271.4V394.5M465.5 282.4V399.4M466.5 264.6V393.4M467.5 267.1V405.4M468.5 279.4V403.2M469.5 277.7V406.7M470.5 269.7V394.8M471.5 264.2V395.8M472.5 284.7V405.9M473.5 266.9V406.3M474.5 264.5V387.0M475.5 287.9V400.3M476.5 272.1V400.0M477.5 264.8V395.9M478.5 264.1V395.6M479.5 264.0V406.1M480.5 270.8V387.6M481.5 284.9V404.9M482.5 268.1V402.9M483.5 270.7V397.1M484.5 272.2V378.6M485.5 264.7V401.0M486.5 267.5V406.8M487.5 292.5V396.5M488.5 268.0V397.4M489.5 267.3V399.7M490.5 267.1V395.0M491.5 290.8V403.1M492.5 275.4V405.8M493.5 271.3V393.6M494.5 271.1V396.8M495.5 272.0V395.9M496.5 266.4V397.0M497.5 282.6V393.8M498.5 273.0V399.4M499.5 289.0V397.0M500.5 267.0V398.8M501.5 284.7V400.5M502.5 271.9V404.2M503.5 273.3V397.0M504.5 270.7V394.5M505.5 277.5V399.3M506.5 272.9V402.5M507.5 265.5V398.6M508.5 273.0V399.9M509.5 265.7V393.2M510.5 264.7V402.8M511.5 264.2V396.6M512.5 289.3V394.4M513.5 281.4V403.2M514.5 278.5V408.1M515.5 267.1V408.9M516.5 268.6V406.2M517.5 268.7V384.2M518.5 272.5V387.3M519.5 265.0V393.1M520.5 270.8V400.7M521.5 283.0V397.4M522.5 275.4V394.5M523.5 275.3V408.3M524.5 267.4V393.1M525.5 267.0V399.3M526.5 269.4V392.2M527.5 273.0V400.1M528.5 279.0V402.8M529.5 264.8V393.4M530.5 280.0V402.8M531.5 266.6V388.6M532.5 286.0V403.2M533.5 266.5V403.8M534.5 267.3V403.2M535.5 268.2V384.0M536.5 270.2V406.2M537.5 266.8V404.9M538.5 269.7V403.7M539.5 266.0V398.4M540.5 268.9V397.7M541.5 273.8V400.0M542.5 268.9V386.4M543.5 266.8V395.2M544.5 270.2V403.3M545.5 269.7V395.4M546.5 271.9V398.7M547.5 266.2V400.2M548.5 274.1V403.7M549.5 268.1V398.3M550.5 268.9V403.7M551.5 264.3V383.6M552.5 264.0V403.3M553.5 272.4V393.6M554.5 272.7V393.4M555.5 267.3V385.6M556.5 267.6V390.2M557.5 274.7V393.2M558.5 285.5V384.2M559.5 283.0V398.6M560.5 274.7V388.2M561.5 272.0V396.0M562.5 268.1V394.4M563.5 274.4V379.9M564.5 264.0V394.4M565.5 275.8V395.9M566.5 287.7V385.8M567.5 281.8V390.7M568.5 299.7V407.7M569.5 307.1V408.1M570.5 285.6V400.4M571.5 266.8V390.5M572.5 277.3V405.3M573.5 290.7V402.2M574.5 298.8V390.4M575.5 281.4V397.0M576.5 266.1V385.7M577.5 281.3V399.8M578.5 273.3V390.7M579.5 274.2V389.0M580.5 273.8V379.0M581.5 283.7V387.1M582.5 277.5V394.9M583.5 270.7V400.2M584.5 281.6V395.1M585.5 299.2V391.8M586.5 265.3V374.7M587.5 266.4V391.8M588.5 266.4V394.2M589.5 268.8V385.4M590.5 279.4V373.5M591.5 278.1V373.2M592.5 292.2V391.1M593.5 278.1V406.8M594.5 266.2V399.0M595.5 274.6V388.9M596.5 272.3V378.9M597.5 267.4V379.5M598.5 301.7V394.2M599.5 271.4V405.9M600.5 278.9V389.8M601.5 271.4V395.2M602.5 294.9V388.4M603.5 268.0V390.7M604.5 267.5V373.2M605.5 274.8V391.1M606.5 285.6V395.6M607.5 274.8V403.3M608.5 264.3V397.0M609.5 276.2V405.1M610.5 266.3V393.7M611.5 264.5V406.2M612.5 267.2V402.0M613.5 264.2V392.4M614.5 278.5V375.7M615.5 285.2V381.5M616.5 306.4V395.2M617.5 285.2V388.5M618.5 294.2V378.2M619.5 290.9V388.5M620.5 277.4V383.1M621.5 264.4V395.0M622.5 267.9V400.0M623.5 264.9V386.8M624.5 281.7V400.5M625.5 299.5V393.7M626.5 281.7V400.9M627.5 272.6V400.2M628.5 281.1V391.4M629.5 272.6V382.6M630.5 289.0V391.4M631.5 269.4V394.6M632.5 290.3V380.3M633.5 282.3V392.7M634.5 291.7V383.6M635.5 281.7V404.8M636.5 288.1V389.2M637.5 301.8V388.9M638.5 299.6V384.4M639.5 308.5V377.3M640.5 318.5V380.0M641.5 313.3V376.4M642.5 320.9V364.9M643.5 317.8V358.6M644.5 319.0V362.5M645.5 323.2V357.5M646.5 323.6V350.0M647.5 328.9V354.1M648.5 329.8V353.4M649.5 328.9V353.3M650.5 328.6V349.4M651.5 330.2V345.4M652.5 329.4V350.6M653.5 331.3V350.0M654.5 331.6V348.3M655.5 333.5V346.1M656.5 332.8V344.2M657.5 332.8V343.3M658.5 333.7V342.4M659.5 334.2V340.8M660.5 335.0V338.8M661.5 335.7V337.9" stroke="#4a4a4a" stroke-width="1" fill="none"/>
<rect x="40" y="264" width="624" height="1" fill="#9090f0" opacity="0.75"/>
<rect x="40" y="409" width="624" height="1" fill="#9090f0" opacity="0.75"/>
<rect x="39" y="255" width="626" height="2" fill="#f4f6ff"/>
<rect x="187" y="93" width="102" height="4" fill="#10105e"/>
<rect x="187" y="97" width="102" height="158" fill="#f2f4fa"/>
<path d="M187.5 103.3V229.8M188.5 130.1V214.2M189.5 102.0V234.5M190.5 102.2V241.4M191.5 127.7V234.0M192.5 123.8V244.0M193.5 116.6V217.5M194.5 109.6V228.3M195.5 107.7V246.8M196.5 109.2V234.7M197.5 103.3V226.2M198.5 113.3V234.1M199.5 146.5V235.3M200.5 103.1V227.8M201.5 120.0V215.0M202.5 113.8V240.0M203.5 141.5V247.9M204.5 137.6V217.4M205.5 137.5V220.6M206.5 115.6V233.6M207.5 102.1V205.2M208.5 112.2V204.6M209.5 112.1V245.2M210.5 129.7V208.4M211.5 107.5V248.0M212.5 117.7V244.4M213.5 114.0V212.4M214.5 115.9V234.1M215.5 138.9V240.3M216.5 130.7V247.5M217.5 106.1V236.4M218.5 101.5V247.7M219.5 128.7V211.5M220.5 118.1V202.5M221.5 109.8V236.4M222.5 115.1V237.1M223.5 111.1V228.4M224.5 134.4V233.1M225.5 107.3V215.6M226.5 146.0V247.9M227.5 111.9V247.9M228.5 145.5V245.5M229.5 114.8V219.3M230.5 112.4V243.5M231.5 105.7V242.8M232.5 125.5V238.6M233.5 130.4V236.6M234.5 137.9V236.3M235.5 128.4V242.7M236.5 108.5V220.1M237.5 105.4V231.7M238.5 109.8V242.8M239.5 112.3V241.0M240.5 101.6V235.9M241.5 126.6V246.9M242.5 125.6V238.1M243.5 145.8V200.7M244.5 148.1V234.6M245.5 105.9V238.5M246.5 106.7V230.3M247.5 101.7V243.4M248.5 129.5V245.2M249.5 102.2V224.3M250.5 102.2V243.6M251.5 129.8V234.8M252.5 104.3V247.7M253.5 116.0V238.5M254.5 107.0V246.8M255.5 103.1V247.8M256.5 115.1V238.8M257.5 126.0V220.3M258.5 104.0V227.6M259.5 130.7V241.9M260.5 129.0V219.6M261.5 104.4V247.5M262.5 121.2V247.6M263.5 110.8V221.9M264.5 104.8V234.4M265.5 109.1V248.0M266.5 101.9V238.9M267.5 110.1V221.6M268.5 116.9V241.7M269.5 107.1V240.6M270.5 102.9V230.8M271.5 104.3V242.5M272.5 105.5V244.7M273.5 111.1V246.0M274.5 122.6V241.5M275.5 108.6V239.0M276.5 103.7V220.4M277.5 107.3V248.0M278.5 106.2V224.2M279.5 114.0V247.9M280.5 111.5V239.2M281.5 110.3V239.5M282.5 103.0V245.1M283.5 120.2V223.2M284.5 123.2V247.4M285.5 105.7V236.0M286.5 103.8V230.8M287.5 102.5V240.8M288.5 108.1V241.7" stroke="#214a66" stroke-width="1" fill="none"/>
<line x1="187" y1="98.5" x2="289" y2="98.5" stroke="#b8b8c8" stroke-width="1" stroke-dasharray="4 3"/>
<rect x="187" y="104" width="102" height="1" fill="#9a9aa4" opacity="0.8"/>
<rect x="187" y="248" width="102" height="1" fill="#9a9aa4" opacity="0.8"/>
<rect x="187" y="254" width="102" height="1" fill="#c8c8d0"/>
<path d="M187 93 L191 93 L187 97 Z" fill="#f0e8c0" stroke="#303020" stroke-width="0.6" shape-rendering="auto"/>
<path d="M187 419 L191 419 L187 415 Z" fill="#f0e8c0" stroke="#303020" stroke-width="0.6" shape-rendering="auto"/>
<path d="M289 93 L285 93 L289 97 Z" fill="#f0e8c0" stroke="#303020" stroke-width="0.6" shape-rendering="auto"/>
<path d="M289 419 L285 419 L289 415 Z" fill="#f0e8c0" stroke="#303020" stroke-width="0.6" shape-rendering="auto"/>
<rect x="39" y="420" width="1.3" height="7" fill="#1a1a1a"/>
<rect x="50" y="421" width="1" height="3" fill="#1a1a1a"/>
<rect x="61" y="421" width="1" height="3" fill="#1a1a1a"/>
<rect x="71" y="421" width="1" height="3" fill="#1a1a1a"/>
<rect x="82" y="421" width="1" height="3" fill="#1a1a1a"/>
<rect x="92" y="421" width="1" height="3" fill="#1a1a1a"/>
<rect x="103" y="421" width="1" height="3" fill="#1a1a1a"/>
<rect x="114" y="421" width="1" height="3" fill="#1a1a1a"/>
<rect x="124" y="421" width="1" height="3" fill="#1a1a1a"/>
<rect x="135" y="421" width="1" height="3" fill="#1a1a1a"/>
<rect x="145" y="420" width="1.3" height="7" fill="#1a1a1a"/>
<rect x="156" y="421" width="1" height="3" fill="#1a1a1a"/>
<rect x="167" y="421" width="1" height="3" fill="#1a1a1a"/>
<rect x="177" y="421" width="1" height="3" fill="#1a1a1a"/>
<rect x="188" y="421" width="1" height="3" fill="#1a1a1a"/>
<rect x="198" y="421" width="1" height="3" fill="#1a1a1a"/>
<rect x="209" y="421" width="1" height="3" fill="#1a1a1a"/>
<rect x="220" y="421" width="1" height="3" fill="#1a1a1a"/>
<rect x="230" y="421" width="1" height="3" fill="#1a1a1a"/>
<rect x="241" y="421" width="1" height="3" fill="#1a1a1a"/>
<rect x="252" y="420" width="1.3" height="7" fill="#1a1a1a"/>
<rect x="262" y="421" width="1" height="3" fill="#1a1a1a"/>
<rect x="273" y="421" width="1" height="3" fill="#1a1a1a"/>
<rect x="283" y="421" width="1" height="3" fill="#1a1a1a"/>
<rect x="294" y="421" width="1" height="3" fill="#1a1a1a"/>
<rect x="305" y="421" width="1" height="3" fill="#1a1a1a"/>
<rect x="315" y="421" width="1" height="3" fill="#1a1a1a"/>
<rect x="326" y="421" width="1" height="3" fill="#1a1a1a"/>
<rect x="336" y="421" width="1" height="3" fill="#1a1a1a"/>
<rect x="347" y="421" width="1" height="3" fill="#1a1a1a"/>
<rect x="358" y="420" width="1.3" height="7" fill="#1a1a1a"/>
<rect x="368" y="421" width="1" height="3" fill="#1a1a1a"/>
<rect x="379" y="421" width="1" height="3" fill="#1a1a1a"/>
<rect x="389" y="421" width="1" height="3" fill="#1a1a1a"/>
<rect x="400" y="421" width="1" height="3" fill="#1a1a1a"/>
<rect x="411" y="421" width="1" height="3" fill="#1a1a1a"/>
<rect x="421" y="421" width="1" height="3" fill="#1a1a1a"/>
<rect x="432" y="421" width="1" height="3" fill="#1a1a1a"/>
<rect x="442" y="421" width="1" height="3" fill="#1a1a1a"/>
<rect x="453" y="421" width="1" height="3" fill="#1a1a1a"/>
<rect x="464" y="420" width="1.3" height="7" fill="#1a1a1a"/>
<rect x="474" y="421" width="1" height="3" fill="#1a1a1a"/>
<rect x="485" y="421" width="1" height="3" fill="#1a1a1a"/>
<rect x="496" y="421" width="1" height="3" fill="#1a1a1a"/>
<rect x="506" y="421" width="1" height="3" fill="#1a1a1a"/>
<rect x="517" y="421" width="1" height="3" fill="#1a1a1a"/>
<rect x="527" y="421" width="1" height="3" fill="#1a1a1a"/>
<rect x="538" y="421" width="1" height="3" fill="#1a1a1a"/>
<rect x="549" y="421" width="1" height="3" fill="#1a1a1a"/>
<rect x="559" y="421" width="1" height="3" fill="#1a1a1a"/>
<rect x="570" y="420" width="1.3" height="7" fill="#1a1a1a"/>
<rect x="580" y="421" width="1" height="3" fill="#1a1a1a"/>
<rect x="591" y="421" width="1" height="3" fill="#1a1a1a"/>
<rect x="602" y="421" width="1" height="3" fill="#1a1a1a"/>
<rect x="612" y="421" width="1" height="3" fill="#1a1a1a"/>
<rect x="623" y="421" width="1" height="3" fill="#1a1a1a"/>
<rect x="633" y="421" width="1" height="3" fill="#1a1a1a"/>
<rect x="644" y="421" width="1" height="3" fill="#1a1a1a"/>
<rect x="655" y="421" width="1" height="3" fill="#1a1a1a"/>
<text x="4.5" y="438" font-family="Liberation Sans" font-size="9.5" fill="#1a1a1a" textLength="16.5" lengthAdjust="spacingAndGlyphs">hms</text>
<text x="39.3" y="438" font-family="Liberation Sans" font-size="9.5" fill="#1a1a1a" text-anchor="middle">0:00.0</text>
<text x="145.4" y="438" font-family="Liberation Sans" font-size="9.5" fill="#1a1a1a" text-anchor="middle">0:25.0</text>
<text x="251.5" y="438" font-family="Liberation Sans" font-size="9.5" fill="#1a1a1a" text-anchor="middle">0:50.0</text>
<text x="357.6" y="438" font-family="Liberation Sans" font-size="9.5" fill="#1a1a1a" text-anchor="middle">1:15.0</text>
<text x="463.7" y="438" font-family="Liberation Sans" font-size="9.5" fill="#1a1a1a" text-anchor="middle">1:40.0</text>
<text x="569.8" y="438" font-family="Liberation Sans" font-size="9.5" fill="#1a1a1a" text-anchor="middle">2:05.0</text>
<rect x="665" y="93" width="3" height="349" fill="#fafafa"/>
<rect x="669" y="84" width="1" height="360" fill="#c4c4c4"/>
<rect x="670" y="84" width="27" height="1" fill="#d0d0d0"/>
<rect x="681" y="85" width="1" height="359" fill="#fafafa"/>
<rect x="682" y="85" width="1" height="359" fill="#d0d0d0"/>
<rect x="40" y="441" width="626" height="1" fill="#d8d8d8"/>
<rect x="665" y="419" width="1" height="23" fill="#b8b8b8"/>
<rect x="2" y="441" width="695" height="1" fill="#a8a8a8"/>
<rect x="2" y="442" width="695" height="18" fill="#f0f0f0"/>
<rect x="3" y="444" width="127" height="1" fill="#d4d4d4"/>
<rect x="3" y="444" width="1" height="15" fill="#d4d4d4"/>
<rect x="134" y="444" width="115" height="1" fill="#d4d4d4"/>
<rect x="134" y="444" width="1" height="15" fill="#d4d4d4"/>
<rect x="250" y="444" width="115" height="1" fill="#d4d4d4"/>
<rect x="250" y="444" width="1" height="15" fill="#d4d4d4"/>
<rect x="366" y="444" width="116" height="1" fill="#d4d4d4"/>
<rect x="366" y="444" width="1" height="15" fill="#d4d4d4"/>
<rect x="483" y="444" width="115" height="1" fill="#d4d4d4"/>
<rect x="483" y="444" width="1" height="15" fill="#d4d4d4"/>
<rect x="599" y="444" width="85" height="1" fill="#d4d4d4"/>
<rect x="599" y="444" width="1" height="15" fill="#d4d4d4"/>
<text x="139.4" y="455.4" font-family="Liberation Sans" font-size="10.7" fill="#1a1a1a" textLength="95.2" lengthAdjust="spacingAndGlyphs">Total: 00:02:27.252</text>
<text x="254.8" y="455.4" font-family="Liberation Sans" font-size="10.7" fill="#1a1a1a" textLength="64.2" lengthAdjust="spacingAndGlyphs">00:00:34.816</text>
<text x="370.8" y="455.4" font-family="Liberation Sans" font-size="10.7" fill="#1a1a1a" textLength="64.5" lengthAdjust="spacingAndGlyphs">00:00:34.816</text>
<text x="487.4" y="455.4" font-family="Liberation Sans" font-size="10.7" fill="#1a1a1a" textLength="65" lengthAdjust="spacingAndGlyphs">00:00:58.573</text>
<line x1="686" y1="458" x2="695" y2="449" stroke="#a0a0a0" stroke-width="1" shape-rendering="auto"/>
<line x1="689" y1="458" x2="695" y2="452" stroke="#a0a0a0" stroke-width="1" shape-rendering="auto"/>
<line x1="692" y1="458" x2="695" y2="455" stroke="#a0a0a0" stroke-width="1" shape-rendering="auto"/>
<g shape-rendering="auto">
<!-- grippers -->
<line x1="5.5" y1="39" x2="5.5" y2="58" stroke="#707070" stroke-width="1" stroke-dasharray="1 1"/>
<line x1="5.5" y1="61" x2="5.5" y2="81" stroke="#707070" stroke-width="1" stroke-dasharray="1 1"/>
<!-- separators -->
<g stroke="#101010" stroke-width="1.7" stroke-dasharray="1.3 1.1">
<line x1="108.5" y1="41" x2="108.5" y2="57"/>
<line x1="209.5" y1="41" x2="209.5" y2="57"/>
<line x1="253" y1="41" x2="253" y2="57"/>
<line x1="334.5" y1="41" x2="334.5" y2="57"/>
<line x1="473.8" y1="41" x2="473.8" y2="57"/>
<line x1="70.4" y1="62" x2="70.4" y2="80"/>
<line x1="209.6" y1="62" x2="209.6" y2="80"/>
<line x1="348.5" y1="62" x2="348.5" y2="80"/>
<line x1="506.8" y1="62" x2="506.8" y2="80"/>
</g>

<!-- ROW 1 -->
<!-- new doc -->
<path d="M15.5 43 H21.5 L24 45.5 V53.5 H15.5 Z" fill="#fff" stroke="#202020" stroke-width="1.1"/>
<path d="M21.5 43 V45.5 H24" fill="none" stroke="#202020" stroke-width="0.9"/>
<!-- open folder -->
<path d="M32.5 46 H37 L38 47 H42 V53 H32.5 Z" fill="#b8b060" stroke="#505018" stroke-width="1"/>
<path d="M33 53 L35.5 48.5 H45.5 L43 53 Z" fill="#d8d080" stroke="#505018" stroke-width="1"/>
<path d="M40 45 Q42 42.5 44.5 43.5" fill="none" stroke="#404040" stroke-width="1"/>
<path d="M43.5 42 L46 43.5 L43.5 45 Z" fill="#202020"/>
<!-- save -->
<rect x="52.5" y="43" width="11.5" height="11" rx="0.8" fill="#4f5640" stroke="#303424" stroke-width="1"/>
<rect x="55" y="43.5" width="6.5" height="4" fill="#b8bca8"/>
<rect x="55.5" y="50" width="5.5" height="4" fill="#d0d2c4"/>
<rect x="56.5" y="50.8" width="1.6" height="2.6" fill="#4f5640"/>
<!-- properties -->
<rect x="70.8" y="46" width="10" height="8" fill="#fff" stroke="#202020" stroke-width="1.1"/>
<line x1="72.5" y1="49" x2="79" y2="49" stroke="#303030" stroke-width="1"/>
<line x1="72.5" y1="51.5" x2="79" y2="51.5" stroke="#303030" stroke-width="1"/>
<path d="M73 47 L80 43.5" stroke="#404040" stroke-width="1.6"/>
<path d="M80.5 42.5 L84 44.5 L80.5 47 Z" fill="#202020"/>
<!-- hammer -->
<path d="M91.5 46.5 L95 43 H100.5 L100 45 H97 L94 48 Z" fill="#707070" stroke="#505050" stroke-width="0.6"/>
<rect x="95.5" y="45.5" width="2.4" height="9.5" fill="#b09070"/>
<rect x="97.4" y="45.5" width="1.6" height="9.5" fill="#e0c8a0"/>
<!-- copy -->
<path d="M114.8 43.2 H119.5 L120.5 44.2 V51.5 H114.8 Z" fill="#fff" stroke="#202020" stroke-width="1.1"/>
<line x1="116" y1="46" x2="118.5" y2="46" stroke="#202020" stroke-width="1"/>
<path d="M119 45.5 H124.5 L126.3 47.3 V53.6 H119 Z" fill="#fff" stroke="#202020" stroke-width="1.2"/>
<line x1="120.8" y1="51" x2="124" y2="51" stroke="#202020" stroke-width="1"/>
<!-- scissors -->
<path d="M136.2 43 L140.5 50 M142.8 43 L138.5 50" stroke="#303040" stroke-width="1.1" fill="none"/>
<ellipse cx="137.3" cy="52.3" rx="1.8" ry="2.2" fill="none" stroke="#50508a" stroke-width="1.3"/>
<ellipse cx="141.8" cy="52.3" rx="1.8" ry="2.2" fill="none" stroke="#50508a" stroke-width="1.3"/>
<!-- paste (disabled) -->
<rect x="152.5" y="44.5" width="9" height="9" fill="#cfcfcf" stroke="#c4c4c4" stroke-width="0.8"/>
<rect x="158.5" y="49" width="7" height="6" fill="#f0f0f0" stroke="#bcbcbc" stroke-width="0.9"/>
<line x1="159.8" y1="51" x2="164" y2="51" stroke="#c0c0c0" stroke-width="0.8"/>
<line x1="159.8" y1="53" x2="164" y2="53" stroke="#c0c0c0" stroke-width="0.8"/>
<!-- delete X -->
<path d="M173.8 43 L184 53 M184 43 L173.8 53" stroke="#101010" stroke-width="1.6" stroke-linecap="round"/>
<!-- trim wave -->
<g stroke="#c8b488" stroke-width="1">
<line x1="191" y1="45" x2="204" y2="45"/><line x1="191" y1="47.3" x2="204" y2="47.3"/>
<line x1="194" y1="42" x2="194" y2="47"/><line x1="200" y1="42" x2="200" y2="47"/>
</g>
<path d="M190.8 51 Q193 48 195.5 50.5 T200.5 53.5 Q203 54 204 50.5" fill="none" stroke="#101010" stroke-width="1.1"/>
<line x1="191" y1="51" x2="199" y2="51" stroke="#202020" stroke-width="0.9"/>
<!-- undo / redo disabled -->
<path d="M217 50 Q220 45 225 46.5 Q228 48 227 51" fill="none" stroke="#d6d6d6" stroke-width="1.6"/>
<path d="M216 47 L218.5 51.5 L221 48.5 Z" fill="#d6d6d6"/>
<path d="M245 50 Q242 45 237 46.5 Q234 48 235 51" fill="none" stroke="#d6d6d6" stroke-width="1.6"/>
<path d="M246 47 L243.5 51.5 L241 48.5 Z" fill="#d6d6d6"/>
<!-- zoom in/out/fit/1:1 -->
<g fill="#fff" stroke="#282828" stroke-width="1.3">
<circle cx="263.4" cy="47" r="4.3"/>
<circle cx="282.4" cy="47" r="4.3"/>
<circle cx="301.3" cy="47.3" r="4.3"/>
<circle cx="320.7" cy="47" r="4.3" stroke="#6a6a6a"/>
</g>
<g stroke="#282828" stroke-width="1.8" stroke-linecap="round">
<line x1="266.6" y1="50.3" x2="270.5" y2="54.2"/>
<line x1="285.6" y1="50.3" x2="289.5" y2="54.2"/>
<line x1="304.5" y1="50.5" x2="308.4" y2="54.4"/>
<line x1="323.9" y1="50.3" x2="327.8" y2="54.2" stroke="#555"/>
</g>
<path d="M261 47 H265.8 M263.4 44.6 V49.4" stroke="#1a1a60" stroke-width="1.8"/>
<path d="M280 47 H284.8" stroke="#1a1a50" stroke-width="1.8"/>
<circle cx="306" cy="43" r="1" fill="#303030"/><path d="M304.5 42 L307.5 42 L307.5 45" fill="none" stroke="#303030" stroke-width="0.9"/>
<rect x="318.5" y="45.3" width="4.4" height="3.5" fill="none" stroke="#8a8a8a" stroke-width="0.8"/>
<!-- play -->
<path d="M344 44.3 L352.3 48.3 L344 52.3 Z" fill="#2a2a2a"/>
<circle cx="365.8" cy="48.3" r="5.3" fill="none" stroke="#2a2a2a" stroke-width="1.2"/>
<path d="M364 45.3 L368.8 48.3 L364 51.3 Z" fill="#2a2a2a"/>
<!-- loop -->
<path d="M385.2 48.3 C383 45 378.8 45 378.8 48.3 C378.8 51.6 383 51.6 385.2 48.3 C387.4 45 391.6 45 391.6 48.3 C391.6 51.6 387.4 51.6 385.2 48.3 Z" fill="none" stroke="#1a1a1a" stroke-width="1.6"/>
<!-- record -->
<circle cx="404.6" cy="48.3" r="4.7" fill="#e0303c"/>
<!-- pause -->
<rect x="420.3" y="45" width="2.5" height="6.8" fill="#2a2a2a"/>
<rect x="424.5" y="45" width="2.5" height="6.8" fill="#2a2a2a"/>
<!-- next -->
<rect x="439.3" y="45" width="2.5" height="6.8" fill="#2a2a2a"/>
<path d="M442.5 45 L447.3 48.4 L442.5 51.8 Z" fill="#2a2a2a"/>
<!-- stop -->
<rect x="458" y="45" width="7" height="6.8" fill="#2a2a2a"/>
<!-- book -->
<path d="M479.5 48 L487 42 L493 46 L485.5 52.5 Z" fill="#b060c0" stroke="#603070" stroke-width="0.9"/>
<path d="M479.5 48 L479.5 50.5 L485.5 55 L493 48.5 L493 46 L485.5 52.5 Z" fill="#e8d0f0" stroke="#603070" stroke-width="0.9"/>
<path d="M485 46 Q487 44.5 488 46.3 Q487.5 47.5 486 48" fill="none" stroke="#f0e0f8" stroke-width="0.9"/>

<!-- ROW 2 -->
<!-- expand arrows -->
<path d="M15.5 67.5 L24 74.3 M24 67.5 L15.5 74.3" stroke="#202020" stroke-width="1.3"/>
<path d="M13.3 65.6 L17.5 66 L14 69 Z M26.2 65.6 L22 66 L25.5 69 Z M13.3 76.2 L17.5 75.8 L14 72.8 Z M26.2 76.2 L22 75.8 L25.5 72.8 Z" fill="#202020"/>
<!-- blue arrow -->
<path d="M33 67.5 L37.5 64.5 L37.3 66.8 Q43 67.5 46 77.5 Q43 72 38 71.5 L38.3 73.8 Z" fill="#3848c8" stroke="#202880" stroke-width="0.8"/>
<path d="M37 75 L39 79 M41 76 L42 79.5" stroke="#e8e080" stroke-width="1.2"/>
<!-- crosshair -->
<line x1="51" y1="70.5" x2="65" y2="70.5" stroke="#202020" stroke-width="1.2"/>
<line x1="58.5" y1="64" x2="58.5" y2="78" stroke="#202020" stroke-width="1.2"/>
<path d="M58.5 68.5 L60.5 70.5 L58.5 72.5 L56.5 70.5 Z" fill="#101010"/>
<!-- zigzag -->
<path d="M75.5 76 L78.5 65.5 L79.5 75 L82.5 64.5 L83.5 74 L86 66 L87 73 L89.5 68" fill="none" stroke="#1a1a1a" stroke-width="1.2"/>
<!-- boxed wave -->
<line x1="94.8" y1="66.5" x2="108.2" y2="66.5" stroke="#404080" stroke-width="1.2"/>
<line x1="94.8" y1="74.6" x2="108.2" y2="74.6" stroke="#404080" stroke-width="1.2"/>
<path d="M95 74 L96.5 68 L98.5 74 L100.5 68 L102.5 74 L104.5 68 L106.5 74 L108 68" fill="none" stroke="#404080" stroke-width="1.1"/>
<!-- red wave -->
<path d="M113.5 70.8 H117 L118.5 67 L119.5 73.5 L121 66 L122 75 L123.5 65.5 L125 72" fill="none" stroke="#c83030" stroke-width="1.3"/>
<line x1="126.3" y1="64.3" x2="126.3" y2="77.5" stroke="#2a1a1a" stroke-width="1.5"/>
<path d="M118 68 L124 66 L124 75 L118 73 Z" fill="#d04040" opacity="0.6"/>
<!-- blue wave -->
<line x1="134" y1="64.3" x2="134" y2="77.8" stroke="#101040" stroke-width="1.5"/>
<path d="M135 66 L136.5 76 L138 67 L139.5 75 L141 68.5 L142.5 73 L144 70 L146.5 70.8" fill="none" stroke="#2838c0" stroke-width="1.4"/>
<path d="M135 67 L142 69 L146 70.8 L142 72.5 L135 75 Z" fill="#3040c0" opacity="0.7"/>
<!-- blue diamonds vertical -->
<path d="M158.5 65 L162.5 68.3 L158.5 71.3 L155 68.3 Z" fill="#6a90b8" stroke="#4a6a90" stroke-width="0.6"/>
<path d="M158.5 71.5 L162.5 74.8 L158.5 78 L155 74.8 Z" fill="#6a90b8" stroke="#4a6a90" stroke-width="0.6"/>
<!-- diagonal diamonds -->
<path d="M180 65.5 L184.3 68.3 L180.5 72 L176.5 69 Z" fill="#6a90b8" stroke="#4a6a90" stroke-width="0.6"/>
<path d="M175.5 69 L179.5 72 L175.8 75.3 L172 72.3 Z" fill="#6a90b8" stroke="#4a6a90" stroke-width="0.6"/>
<!-- sound waves -->
<g fill="none" stroke="#50508a" stroke-width="1.1">
<path d="M194 65.5 Q190.5 71.5 194 77.5"/>
<path d="M196.5 67 Q193.8 71.5 196.5 76"/>
<path d="M199 68.5 Q197 71.5 199 74.5"/>
<path d="M201.5 70 Q200.5 71.5 201.5 73"/>
</g>
<!-- megaphone -->
<path d="M221 66.5 L216 71 L221 75.5" fill="none" stroke="#101010" stroke-width="1.6"/>
<path d="M219.5 68 L217.5 71 L219.5 74 Z" fill="#303030"/>
<g fill="none" stroke="#202020" stroke-width="1">
<path d="M222.5 66.5 Q221.5 68 222.5 69.5 Q223.5 71 222.5 72.5 Q221.5 74 222.5 75.5"/>
<path d="M225 65.5 Q224 67.5 225 69.5 Q226 71.5 225 73.5 Q224 75.5 225 77"/>
<path d="M227.5 65 Q226.5 67 227.5 69 Q228.5 71 227.5 73 Q226.5 75 227.5 77"/>
</g>
<path d="M226 77 L229 77.5" stroke="#404040" stroke-width="0.8"/>
<!-- box step -->
<rect x="235.5" y="65.8" width="11" height="10.3" fill="#f6f6f6" stroke="#707070" stroke-width="1"/>
<path d="M237.5 68.8 H240" stroke="#303030" stroke-width="1.1"/>
<path d="M241 73.5 H244.5" stroke="#202020" stroke-width="1.4"/>
<path d="M243.5 72 L245 73.5 L243.5 75" fill="none" stroke="#202020" stroke-width="0.9"/>
<!-- box wave -->
<rect x="254.3" y="65.8" width="11.5" height="10.3" fill="#f6f6f6" stroke="#707070" stroke-width="1"/>
<path d="M256.3 72.5 L257.5 69.5 L258.7 72.5 L259.9 69.5 L261.1 72.5 L262.3 69.5 L263.5 72.5" fill="none" stroke="#202020" stroke-width="0.8"/>
<!-- navy squiggle -->
<path d="M273.5 71 Q275 66.5 278 68.5 Q280 70.5 281 67.5 Q282.5 65 285 67.5 Q286.5 70 284.5 74.5 Q283 77 281.5 74 M275 72 Q275.5 75 274.5 77" fill="none" stroke="#1a1a5a" stroke-width="2.3"/>
<path d="M276.5 70 L277.5 72 M282 70 L283 72" stroke="#e0e0f0" stroke-width="0.9"/>
<!-- water wave -->
<g fill="none" stroke="#6a98b8" stroke-width="1">
<path d="M292 70 Q293.5 66.5 295 70 Q296.5 66.5 298 70 Q299.5 66.5 301 70 Q302.5 66.5 304 70"/>
<path d="M292 72.8 Q293.5 70 295 72.8 Q296.5 70 298 72.8 Q299.5 70 301 72.8 Q302.5 70 304 72.8"/>
<path d="M292 75 H304" stroke-dasharray="1 1"/>
</g>
<!-- double arrow bars -->
<line x1="312" y1="71" x2="323.5" y2="71" stroke="#101010" stroke-width="1.3"/>
<path d="M310.7 71 L313.8 68.5 L313.8 73.5 Z M324.4 71 L321.3 68.5 L321.3 73.5 Z" fill="#101010"/>
<line x1="316" y1="64.5" x2="316" y2="77.8" stroke="#303030" stroke-width="0.9"/>
<line x1="319" y1="64.5" x2="319" y2="77.8" stroke="#303030" stroke-width="0.9"/>
<!-- bars + yellow -->
<line x1="332" y1="64" x2="332" y2="79" stroke="#9aa0b0" stroke-width="1.2"/>
<line x1="334.5" y1="64" x2="334.5" y2="79" stroke="#9aa0b0" stroke-width="1.2"/>
<circle cx="339.5" cy="68.5" r="2.3" fill="#b0a860"/>
<circle cx="339.5" cy="74.5" r="2.3" fill="#b0a860"/>
<!-- row2 texts BPF.. -->
<g font-family="Liberation Sans" font-size="13.8" fill="#1a1a1a">
<text x="355" y="76.6" textLength="12.2" lengthAdjust="spacingAndGlyphs">BPF</text>
<text x="373.6" y="76.6" textLength="12.1" lengthAdjust="spacingAndGlyphs">HPF</text>
<text x="392.9" y="76.6" textLength="12.1" lengthAdjust="spacingAndGlyphs">LPF</text>
<text x="412.1" y="76.6" textLength="12.2" lengthAdjust="spacingAndGlyphs">HSF</text>
<text x="430.7" y="76.6" textLength="12.2" lengthAdjust="spacingAndGlyphs">LSF</text>
<text x="488.4" y="76.3" textLength="12.6" lengthAdjust="spacingAndGlyphs" font-size="13.2">FFT</text>
</g>
<!-- EQ bars bolt -->
<g stroke="#7080a0" stroke-width="1" stroke-dasharray="1 1">
<line x1="451.5" y1="69" x2="451.5" y2="77.5"/>
<line x1="454.5" y1="72" x2="454.5" y2="77.5"/>
<line x1="457.5" y1="70" x2="457.5" y2="77.5"/>
<line x1="460" y1="73" x2="460" y2="77.5"/>
</g>
<path d="M459.5 64.3 L455 69.5 H458 L455.5 73.5 L461 67.5 H458 Z" fill="#c8d040"/>
<!-- EQ -->
<text x="469.6" y="71.3" font-family="Liberation Sans" font-weight="bold" font-size="7.2" fill="#30309a" textLength="10.8" lengthAdjust="spacingAndGlyphs">EQ</text>
<path d="M470 73 L471.3 76.8 L472.6 73 L473.9 76.8 L475.2 73 L476.5 76.8 L477.8 73 L479.1 76.8 L480.4 73" fill="none" stroke="#202040" stroke-width="1"/>
<!-- icon pen lines -->
<g stroke="#202020" stroke-width="1.2" fill="none">
<line x1="513" y1="68.5" x2="520" y2="68.5"/>
<line x1="513" y1="71.5" x2="519" y2="71.5"/>
<line x1="513" y1="74.5" x2="524" y2="74.5"/>
<path d="M519 75 L525.5 65.5"/>
</g>
<path d="M535 68.8 L538.5 65 L542 68.8 L538.5 72 Z" fill="#88a8cc" stroke="#6080a8" stroke-width="0.6"/>
<g fill="none" stroke="#707070" stroke-width="0.8" stroke-dasharray="1 0.7">
<circle cx="535" cy="76" r="1.5"/><circle cx="538.6" cy="76" r="1.5"/><circle cx="542.2" cy="76" r="1.5"/>
</g>
<rect x="551" y="68.5" width="8.5" height="7.5" fill="none" stroke="#202020" stroke-width="1" stroke-dasharray="1.2 0.8"/>
<line x1="551" y1="76.5" x2="563" y2="76.5" stroke="#202020" stroke-width="1.2"/>
<path d="M557 75.5 L564 65.3" stroke="#202020" stroke-width="1.2"/>
<path d="M553 70.5 L557.5 74 M557.5 70.5 L553 74" stroke="#404040" stroke-width="0.8"/>
</g>

</svg></body></html>
